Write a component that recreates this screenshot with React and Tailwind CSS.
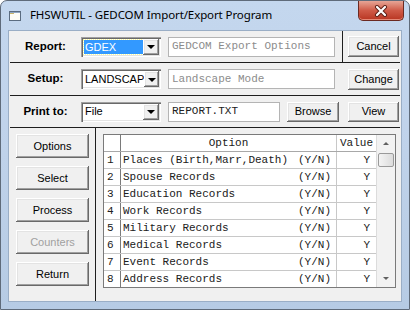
// FHSWUTIL - GEDCOM Import/Export dialog (classic Win7 look)

const sans = "font-['Liberation_Sans',Arial,sans-serif]";
const mono = "font-['Liberation_Mono','Courier_New',monospace]";

const btn3d =
  "bg-[#f0f0f0] shadow-[inset_-1px_-1px_0_#696969,inset_1px_1px_0_#ffffff,inset_-2px_-2px_0_#a0a0a0,inset_2px_2px_0_#e3e3e3]";

const records = [
  ["1", "Places (Birth,Marr,Death)"],
  ["2", "Spouse Records"],
  ["3", "Education Records"],
  ["4", "Work Records"],
  ["5", "Military Records"],
  ["6", "Medical Records"],
  ["7", "Event Records"],
  ["8", "Address Records"],
];

function Button({ children, className = "", disabled = false }) {
  return (
    <div
      className={`${btn3d} ${sans} flex items-center justify-center text-[11px] ${
        disabled ? "text-[#a0a0a0]" : "text-black"
      } ${className}`}
    >
      {children}
    </div>
  );
}

function Combo({ value, selected = false }) {
  return (
    <div className="w-[80px] h-[20px] bg-white flex shadow-[inset_1px_1px_0_#a0a0a0,inset_2px_2px_0_#696969,inset_-1px_-1px_0_#ffffff,inset_-2px_-2px_0_#e3e3e3] p-[2px]">
      <div className="flex-1 flex items-center pl-[1px]">
        {selected ? (
          <div className={`${sans} h-[14px] w-full bg-[#3399ff] text-white text-[11px] leading-[14px] pl-[1px] outline-1 outline-dotted outline-[#ffff99]`}>
            {value}
          </div>
        ) : (
          <div className={`${sans} text-[11px] text-black pl-[1px]`}>{value}</div>
        )}
      </div>
      <div className={`${btn3d} w-[16px] flex items-center justify-center`}>
        <div className="w-0 h-0 border-l-[4px] border-r-[4px] border-t-[4px] border-l-transparent border-r-transparent border-t-black mt-[1px]" />
      </div>
    </div>
  );
}

function Field({ text, width, dim = false }) {
  return (
    <div
      className={`${mono} h-[20px] bg-white border border-[#b4b4b4] flex items-center pl-[3px] text-[11px] ${
        dim ? "text-[#8c8c8c]" : "text-[#202020]"
      } ${width}`}
    >
      {text}
    </div>
  );
}

function Label({ children }) {
  return (
    <div className={`${sans} w-[71px] text-center font-bold text-[11.5px] text-black`}>{children}</div>
  );
}

function Scrollbar() {
  return (
    <div className="w-[19px] bg-[#f2f2f2] border-l border-[#dcdcdc] flex flex-col">
      <div className="h-[17px] flex items-center justify-center">
        <div className="w-0 h-0 border-l-[3px] border-r-[3px] border-b-[3px] border-l-transparent border-r-transparent border-b-[#606060]" />
      </div>
      <div className="mx-[1px] mt-[1px] h-[14px] rounded-[2px] border border-[#9a9a9a] bg-gradient-to-r from-[#f4f4f4] to-[#dcdcdc]" />
      <div className="flex-1" />
      <div className="h-[17px] flex items-center justify-center">
        <div className="w-0 h-0 border-l-[3px] border-r-[3px] border-t-[3px] border-l-transparent border-r-transparent border-t-[#606060]" />
      </div>
    </div>
  );
}

function OptionsTable() {
  return (
    <div className="w-[293px] h-[154px] border border-[#7a7a7a] bg-white flex">
      <div className="flex-1 flex flex-col">
        <div className={`${mono} h-[17px] flex text-[11px] text-[#202020] border-b border-[#a8a8a8]`}>
          <div className="w-[17px] border-r border-[#7a7a7a]" />
          <div className="w-[216px] text-center border-r border-[#c8c8c8] leading-[16px]">Option</div>
          <div className="flex-1 pl-[3px] leading-[16px]">Value</div>
        </div>
        {records.map(([n, name], i) => (
          <div
            key={n}
            className={`${mono} h-[17px] flex text-[11px] text-[#202020] ${i < records.length - 1 ? "border-b border-[#c8c8c8]" : ""}`}
          >
            <div className="w-[17px] border-r border-[#7a7a7a] pl-[3px] leading-[16px]">{n}</div>
            <div className="w-[216px] flex justify-between pl-[2px] pr-[5px] border-r border-[#c8c8c8] leading-[16px]">
              <span>{name}</span>
              <span>(Y/N)</span>
            </div>
            <div className="flex-1 text-right pr-[6px] leading-[16px]">Y</div>
          </div>
        ))}
      </div>
      <Scrollbar />
    </div>
  );
}

function CloseButton() {
  return (
    <div className="w-[46px] h-[20px] rounded-b-[5px] border border-t-0 border-[#6b2a22] bg-gradient-to-b from-[#e6a596] via-[#cf5a47] to-[#b83420] flex items-center justify-center shadow-[inset_0_-1px_0_#e58a78]">
      <svg width="14" height="12" viewBox="0 0 14 12">
        <path d="M3 2 L11 10 M11 2 L3 10" stroke="#5a1d14" strokeWidth="4" strokeLinecap="round" />
        <path d="M3 2 L11 10 M11 2 L3 10" stroke="#ffffff" strokeWidth="2.2" strokeLinecap="round" />
      </svg>
    </div>
  );
}

function AppIcon() {
  return (
    <svg width="12" height="11" viewBox="0 0 12 11">
      <rect x="0.5" y="1.5" width="11" height="9" fill="#fdfdf6" stroke="#5b6c80" />
      <rect x="1" y="2" width="4" height="2" fill="#c9b66c" />
      <rect x="1" y="2" width="10" height="1" fill="#8fa6c2" />
    </svg>
  );
}

export default function App() {
  return (
    <div className="w-[410px] h-[310px] bg-white">
      <div className="w-[410px] h-[310px] rounded-t-[7px] border border-[#5f6b7a] bg-gradient-to-b from-[#c4d7ee] via-[#bfd2ea] to-[#b6cbe4] flex flex-col">
        {/* ── Title bar ──────────────────────────────────────────── */}
        <div className="h-[29px] flex items-start">
          <div className="flex items-center h-[28px] pl-[8px] gap-[9px]">
            <AppIcon />
            <div className="font-['Noto_Sans',sans-serif] text-[11.5px] text-black tracking-[-0.1px]">
              FHSWUTIL - GEDCOM Import/Export Program
            </div>
          </div>
          <div className="ml-auto mr-[5px]">
            <CloseButton />
          </div>
        </div>

        {/* ── Client area ────────────────────────────────────────── */}
        <div className="mx-[7px] h-[272px] bg-[#f0f0f0] border border-[#9aaec6] flex flex-col px-[1px]">
          {/* Report row */}
          <div className="h-[32px] flex items-center border-b border-[#1e1e1e]">
            <Label>Report:</Label>
            <Combo value="GDEX" selected />
            <div className="w-[7px]" />
            <Field text="GEDCOM Export Options" width="w-[167px]" dim />
            <div className="w-[7px]" />
            <div className="self-stretch w-px bg-[#1e1e1e]" />
            <div className="w-[5px]" />
            <Button className="w-[51px] h-[21px]">Cancel</Button>
          </div>

          {/* Setup row */}
          <div className="h-[33px] flex items-center border-b border-[#1e1e1e]">
            <Label>Setup:</Label>
            <Combo value="LANDSCAP" />
            <div className="w-[7px]" />
            <Field text="Landscape Mode" width="w-[167px]" dim />
            <div className="w-[13px]" />
            <Button className="w-[51px] h-[21px]">Change</Button>
          </div>

          {/* Print to row */}
          <div className="h-[32px] flex items-center border-b border-[#1e1e1e]">
            <Label>Print to:</Label>
            <Combo value="File" />
            <div className="w-[7px]" />
            <Field text="REPORT.TXT" width="w-[112px]" />
            <div className="w-[7px]" />
            <Button className="w-[52px] h-[20px]">Browse</Button>
            <div className="w-[9px]" />
            <Button className="w-[51px] h-[20px]">View</Button>
          </div>

          {/* Bottom section */}
          <div className="flex-1 flex">
            <div className="w-[86px] border-r border-[#1e1e1e] flex flex-col gap-[8px] pt-[6px] pl-[6px]">
              <Button className="w-[73px] h-[24px]">Options</Button>
              <Button className="w-[73px] h-[24px]">Select</Button>
              <Button className="w-[73px] h-[24px]">Process</Button>
              <Button className="w-[73px] h-[24px]" disabled>Counters</Button>
              <Button className="w-[73px] h-[24px]">Return</Button>
            </div>
            <div className="pt-[6px] pl-[7px]">
              <OptionsTable />
            </div>
          </div>
        </div>
      </div>
    </div>
  );
}
